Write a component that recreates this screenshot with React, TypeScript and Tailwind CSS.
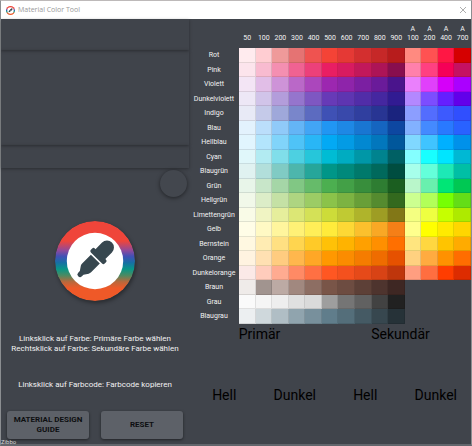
import React from "react";

const shades = ["50", "100", "200", "300", "400", "500", "600", "700", "800", "900"];
const accents = ["100", "200", "400", "700"];

const palette: { name: string; colors: string }[] = [
  { name: "Rot", colors: "ffebee ffcdd2 ef9a9a e57373 ef5350 f44336 e53935 d32f2f c62828 b71c1c ff8a80 ff5252 ff1744 d50000" },
  { name: "Pink", colors: "fce4ec f8bbd0 f48fb1 f06292 ec407a e91e63 d81b60 c2185b ad1457 880e4f ff80ab ff4081 f50057 c51162" },
  { name: "Violett", colors: "f3e5f5 e1bee7 ce93d8 ba68c8 ab47bc 9c27b0 8e24aa 7b1fa2 6a1b9a 4a148c ea80fc e040fb d500f9 aa00ff" },
  { name: "Dunkelviolett", colors: "ede7f6 d1c4e9 b39ddb 9575cd 7e57c2 673ab7 5e35b1 512da8 4527a0 311b92 b388ff 7c4dff 651fff 6200ea" },
  { name: "Indigo", colors: "e8eaf6 c5cae9 9fa8da 7986cb 5c6bc0 3f51b5 3949ab 303f9f 283593 1a237e 8c9eff 536dfe 3d5afe 304ffe" },
  { name: "Blau", colors: "e3f2fd bbdefb 90caf9 64b5f6 42a5f5 2196f3 1e88e5 1976d2 1565c0 0d47a1 82b1ff 448aff 2979ff 2962ff" },
  { name: "Hellblau", colors: "e1f5fe b3e5fc 81d4fa 4fc3f7 29b6f6 03a9f4 039be5 0288d1 0277bd 01579b 80d8ff 40c4ff 00b0ff 0091ea" },
  { name: "Cyan", colors: "e0f7fa b2ebf2 80deea 4dd0e1 26c6da 00bcd4 00acc1 0097a7 00838f 006064 84ffff 18ffff 00e5ff 00b8d4" },
  { name: "Blaugrün", colors: "e0f2f1 b2dfdb 80cbc4 4db6ac 26a69a 009688 00897b 00796b 00695c 004d40 a7ffeb 64ffda 1de9b6 00bfa5" },
  { name: "Grün", colors: "e8f5e9 c8e6c9 a5d6a7 81c784 66bb6a 4caf50 43a047 388e3c 2e7d32 1b5e20 b9f6ca 69f0ae 00e676 00c853" },
  { name: "Hellgrün", colors: "f1f8e9 dcedc8 c5e1a5 aed581 9ccc65 8bc34a 7cb342 689f38 558b2f 33691e ccff90 b2ff59 76ff03 64dd17" },
  { name: "Limettengrün", colors: "f9fbe7 f0f4c3 e6ee9c dce775 d4e157 cddc39 c0ca33 afb42b 9e9d24 827717 f4ff81 eeff41 c6ff00 aeea00" },
  { name: "Gelb", colors: "fffde7 fff9c4 fff59d fff176 ffee58 ffeb3b fdd835 fbc02d f9a825 f57f17 ffff8d ffff00 ffea00 ffd600" },
  { name: "Bernstein", colors: "fff8e1 ffecb3 ffe082 ffd54f ffca28 ffc107 ffb300 ffa000 ff8f00 ff6f00 ffe57f ffd740 ffc400 ffab00" },
  { name: "Orange", colors: "fff3e0 ffe0b2 ffcc80 ffb74d ffa726 ff9800 fb8c00 f57c00 ef6c00 e65100 ffd180 ffab40 ff9100 ff6d00" },
  { name: "Dunkelorange", colors: "fbe9e7 ffccbc ffab91 ff8a65 ff7043 ff5722 f4511e e64a19 d84315 bf360c ff9e80 ff6e40 ff3d00 dd2c00" },
  { name: "Braun", colors: "efebe9 a1948f bcaaa4 a1887f 8d6e63 795548 6d4c41 5d4037 4e342e 3e2723" },
  { name: "Grau", colors: "fafafa f5f5f5 eeeeee e0e0e0 dadada 9e9e9e 757575 616161 424242 212121" },
  { name: "Blaugrau", colors: "eceff1 cfd8dc b0bec5 90a4ae 78909c 607d8b 546e7a 455a64 37474f 263238" },
];

function Logo({ className }: { className: string }) {
  const id = React.useId();
  return (
    <svg viewBox="0 0 80 80" className={className} aria-hidden="true">
      <defs>
        <linearGradient id={id} x1="0" y1="0" x2="0" y2="1">
          <stop offset="0.25" stopColor="#ef453a" />
          <stop offset="0.37" stopColor="#8e4a9c" />
          <stop offset="0.44" stopColor="#4350b5" />
          <stop offset="0.52" stopColor="#176fa5" />
          <stop offset="0.6" stopColor="#079688" />
          <stop offset="0.68" stopColor="#4c8a62" />
          <stop offset="0.76" stopColor="#b9683c" />
          <stop offset="0.84" stopColor="#ef5928" />
        </linearGradient>
      </defs>
      <circle cx="40" cy="40" r="40" fill={`url(#${id})`} />
      <circle cx="40" cy="40" r="28.2" fill="#fff" />
      <g transform="translate(39.5 39) rotate(45) scale(0.93)" fill="#37474f">
        <path d="M-7.500 -9V-19A7.500 7.500 0 0 1 7.500 -19V-9H8.500Q10.500 -9 10.500 -7V-5Q10.500 -3 8.500 -3H-8.500Q-10.500 -3 -10.500 -5V-7Q-10.500 -9 -8.500 -9Z" />
        <path d="M-6.800 -1.300H6.800V12Q6.800 13.500 6 14.800L2.800 19.500V22Q2.800 24.800 0 24.800T-2.800 22V19.500L-6 14.800Q-6.800 13.500 -6.800 12Z" />
      </g>
    </svg>
  );
}

function ActionButton({ children }: { children: React.ReactNode }) {
  return (
    <button className="flex h-7 flex-1 items-center justify-center rounded-[3px] bg-[#5d6168] text-center text-[8px] leading-[10px] font-bold text-[#0d0f11] shadow-[0_1px_3px_rgba(0,0,0,0.5)]">
      {children}
    </button>
  );
}

export default function App() {
  return (
    <div className="relative flex min-h-screen flex-col border-x border-t border-b-2 border-[#8b8e91] border-t-[#bdb9b9] border-b-[#62666c] bg-[#40444b] font-[Roboto,sans-serif] text-[#f2f2f2]">
      <header className="flex h-[18px] items-center bg-white pr-1 pl-[5px] font-['Open_Sans',sans-serif] text-[7px] text-[#999]">
        <Logo className="size-[9px]" />
        <h1 className="ml-[3px]">Material Color Tool</h1>
        <button aria-label="Schließen" className="ml-auto text-[#999]">
          <svg viewBox="0 0 8 8" className="size-2" stroke="currentColor" strokeWidth="0.8">
            <path d="M1 1l6 6M7 1l-6 6" />
          </svg>
        </button>
      </header>

      <main className="flex flex-1">
        <aside className="flex w-2/5 flex-col">
          <div className="h-[31px] shadow-[0_1px_3px_rgba(0,0,0,0.35)]" />
          <div className="h-[95px] shadow-[0_1px_3px_rgba(0,0,0,0.35)]" />
          <div className="h-[23px] shadow-[0_1px_3px_rgba(0,0,0,0.35)]" />
          <button
            aria-label="Farbe"
            className="mt-0.5 mr-0.5 size-[27px] self-end rounded-full bg-[#43474e] shadow-[0_1px_4px_rgba(0,0,0,0.5)]"
          />
          <div className="mt-6 flex justify-center">
            <Logo className="size-20 rounded-full shadow-[1px_2px_4px_rgba(0,0,0,0.4)]" />
          </div>
          <p className="mt-[33px] text-center text-[8px] leading-[10px] whitespace-nowrap">
            Linksklick auf Farbe: Primäre Farbe wählen
            <br />
            Rechtsklick auf Farbe: Sekundäre Farbe wählen
          </p>
          <p className="mt-[26px] text-center text-[8px] leading-[10px] whitespace-nowrap">
            Linksklick auf Farbcode: Farbcode kopieren
          </p>
          <div className="mt-[21px] flex gap-3 px-1.5">
            <ActionButton>
              MATERIAL DESIGN
              <br />
              GUIDE
            </ActionButton>
            <ActionButton>RESET</ActionButton>
          </div>
        </aside>

        <section className="min-w-0 flex-1">
          <table className="w-full table-fixed border-collapse text-[7px] leading-[9px]">
            <thead>
              <tr className="h-[29px] align-bottom">
                <td className="w-[50px]" />
                {shades.map((s) => (
                  <th key={s} scope="col" className="p-0 pb-[5px] font-normal">{s}</th>
                ))}
                {accents.map((s) => (
                  <th key={s} scope="col" className="p-0 pb-[5px] font-normal">
                    A<br />{s}
                  </th>
                ))}
              </tr>
            </thead>
            <tbody>
              {palette.map((row) => (
                <tr key={row.name} className="odd:h-[15px] even:h-[14px]">
                  <th scope="row" className="p-0 font-normal">{row.name}</th>
                  {row.colors.split(" ").map((c, i) => (
                    <td key={i} className="h-[inherit] p-0" style={{ backgroundColor: `#${c}` }}>
                      <button
                        aria-label={`${row.name} #${c}`}
                        className="block h-full w-full border-r border-b border-black/10"
                      />
                    </td>
                  ))}
                </tr>
              ))}
            </tbody>
          </table>
          <div className="grid grid-cols-2 text-center text-[14px] leading-5 text-black">
            <h2>Primär</h2>
            <h2>Sekundär</h2>
          </div>
          <div className="mt-[41px] grid grid-cols-4 text-center text-[14px] leading-5 text-black">
            <span>Hell</span>
            <span>Dunkel</span>
            <span>Hell</span>
            <span>Dunkel</span>
          </div>
        </section>
      </main>
      <small className="absolute -bottom-0.5 left-0 text-[6px] leading-[8px] text-[#d5d5d5]">Zibbo</small>
    </div>
  );
}
